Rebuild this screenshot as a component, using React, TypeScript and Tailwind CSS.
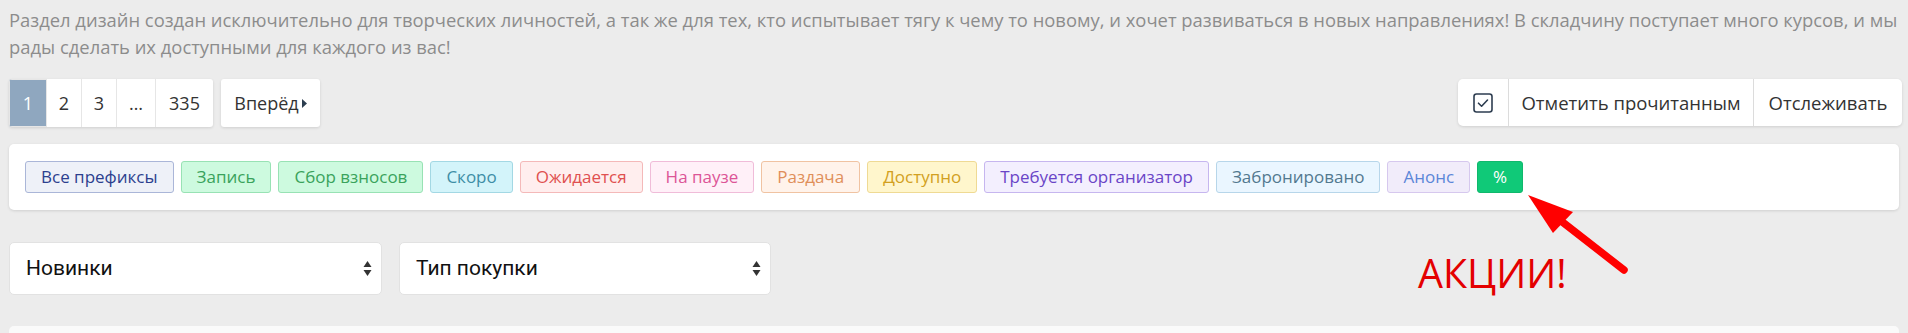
import type { ReactNode } from "react"

type Prefix = { label: string; cls: string }

const prefixes: Prefix[] = [
  { label: "Все префиксы", cls: "bg-[#eef1f8] border-[#aab6d8] text-[#2c3f8e]" },
  { label: "Запись", cls: "bg-[#cdfadf] border-[#98e2b4] text-[#3aa35c]" },
  { label: "Сбор взносов", cls: "bg-[#cdfadf] border-[#98e2b4] text-[#3aa35c]" },
  { label: "Скоро", cls: "bg-[#d3f4fa] border-[#a3d8e4] text-[#3e8ea6]" },
  { label: "Ожидается", cls: "bg-[#ffeeee] border-[#f4b9b9] text-[#e05050]" },
  { label: "На паузе", cls: "bg-[#fff0f8] border-[#f0bcd9] text-[#dc5597]" },
  { label: "Раздача", cls: "bg-[#fff3eb] border-[#f0c3a2] text-[#df8f5a]" },
  { label: "Доступно", cls: "bg-[#fff6cc] border-[#efda94] text-[#d2a021]" },
  { label: "Требуется организатор", cls: "bg-[#f3effe] border-[#c6b6ef] text-[#6a45c7]" },
  { label: "Забронировано", cls: "bg-[#eaf6ff] border-[#b7d6ea] text-[#52798f]" },
  { label: "Анонс", cls: "bg-[#f1ecfa] border-[#d6c8ee] text-[#5b86d8]" },
  { label: "%", cls: "bg-[#10c978] border-[#10b86c] text-white" },
]

function PageBtn({ children, className = "" }: { children: ReactNode; className?: string }) {
  return (
    <div className={`flex h-full items-center justify-center border-r border-[#e6e6e6] last:border-r-0 ${className}`}>
      {children}
    </div>
  )
}

function SelectBox({ label, width }: { label: string; width: string }) {
  return (
    <div
      className={`flex h-[53px] items-center justify-between rounded-[5px] border border-[#e2e2e2] bg-white pl-[16px] pr-[9px] ${width}`}
    >
      <span className="font-['Roboto',sans-serif] text-[21px] text-[#111]">{label}</span>
      <svg width="9" height="17" viewBox="0 0 9 17" className="text-[#333]">
        <path d="M4.5 1 L8.5 7 L0.5 7 Z" fill="currentColor" />
        <path d="M4.5 16 L8.5 10 L0.5 10 Z" fill="currentColor" />
      </svg>
    </div>
  )
}

export default function App() {
  return (
    <div className="relative min-h-screen overflow-hidden bg-[#ececec] px-[9px] pt-[6px] font-['Open_Sans',sans-serif]">
      {/* Description */}
      <p className="text-[18.4px] leading-[27px] text-[#8c8c8c]">
        Раздел дизайн создан исключительно для творческих личностей, а так же для тех, кто испытывает тягу к чему то
        новому, и хочет развиваться в новых направлениях! В складчину поступает много курсов, и мы рады сделать их
        доступными для каждого из вас!
      </p>

      {/* Pagination + actions */}
      <div className="mt-[19px] flex items-start justify-between">
        <div className="flex gap-[8px]">
          <div className="flex h-[48px] overflow-hidden rounded-[3px] bg-white text-[18px] text-[#333] shadow-[0_1px_3px_rgba(0,0,0,0.12)]">
            <PageBtn className="w-[38px] border border-[#7c94ad] bg-[#8fa7bf] text-white">1</PageBtn>
            <PageBtn className="w-[35px]">2</PageBtn>
            <PageBtn className="w-[35px]">3</PageBtn>
            <PageBtn className="w-[39px]">…</PageBtn>
            <PageBtn className="w-[57px]">335</PageBtn>
          </div>
          <div className="flex h-[48px] w-[99px] items-center justify-center gap-[3px] rounded-[3px] bg-white text-[18px] text-[#333] shadow-[0_1px_3px_rgba(0,0,0,0.12)]">
            <span>Вперёд</span>
            <svg width="5" height="9" viewBox="0 0 5 9">
              <path d="M0 0 L5 4.5 L0 9 Z" fill="#2c3e50" />
            </svg>
          </div>
        </div>

        <div className="mr-[-3px] flex h-[47px] overflow-hidden rounded-[5px] bg-white text-[18.5px] text-[#333] shadow-[0_1px_3px_rgba(0,0,0,0.12)]">
          <div className="flex w-[51px] items-center justify-center border-r border-[#dcdcdc]">
            <svg width="20" height="20" viewBox="0 0 20 20" fill="none">
              <rect x="1" y="1" width="18" height="18" rx="2.5" stroke="#2d3d50" strokeWidth="1.6" />
              <path d="M5.5 10.2 L8.6 13.2 L14.5 7" stroke="#2d3d50" strokeWidth="1.6" strokeLinecap="round" strokeLinejoin="round" />
            </svg>
          </div>
          <div className="flex w-[245px] items-center justify-center border-r border-[#dcdcdc]">Отметить прочитанным</div>
          <div className="flex w-[148px] items-center justify-center">Отслеживать</div>
        </div>
      </div>

      {/* Prefix filter */}
      <div className="mt-[17px] flex h-[66px] items-center gap-[7px] rounded-[5px] bg-white pl-[16px] shadow-[0_1px_3px_rgba(0,0,0,0.12)]">
        {prefixes.map((p) => (
          <span
            key={p.label}
            className={`flex h-[32px] items-center rounded-[3px] border px-[15px] text-[17px] ${p.cls}`}
          >
            {p.label}
          </span>
        ))}
      </div>

      {/* Filters */}
      <div className="mt-[32px] flex gap-[17px]">
        <SelectBox label="Новинки" width="w-[373px]" />
        <SelectBox label="Тип покупки" width="w-[372px]" />
      </div>

      <div className="mt-[31px] h-[9px] rounded-t-[5px] bg-[#fafafa]" />

      {/* Annotation overlay */}
      <span className="absolute left-[1418px] top-[248px] text-[39.5px] leading-[50px] text-[#e40000]">АКЦИИ!</span>
      <svg className="pointer-events-none absolute left-0 top-0" width="1908" height="333">
        <line x1="1624" y1="270" x2="1556" y2="217" stroke="#ff0000" strokeWidth="7.5" strokeLinecap="round" />
        <path d="M1528 195 L1553 233 L1573 212 Z" fill="#ff0000" />
      </svg>
    </div>
  )
}
